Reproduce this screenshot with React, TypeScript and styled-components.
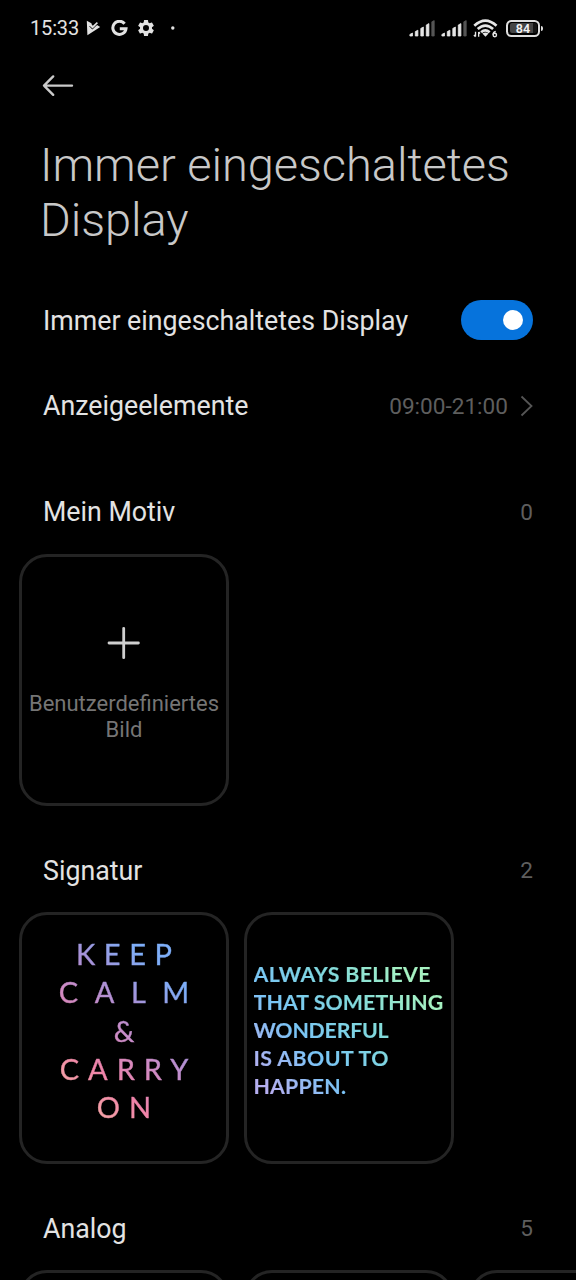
import React from 'react';
import styled, { createGlobalStyle } from 'styled-components';

const GlobalStyle = createGlobalStyle`
  *, *::before, *::after { box-sizing: border-box; }
  html, body { margin: 0; padding: 0; background: #000; }
  body { font-family: Roboto, "Liberation Sans", sans-serif; color: #e3e3e3; }
`;

const Screen = styled.div`
  width: 576px;
  height: 1280px;
  overflow: hidden;
  background: #000;
  display: flex;
  flex-direction: column;
`;

const StatusBar = styled.header`
  flex: none;
  height: 56px;
  padding: 0 36px 0 30px;
  display: flex;
  align-items: center;
  justify-content: space-between;
`;

const StatusGroup = styled.div`
  display: flex;
  align-items: center;
`;

const Clock = styled.span`
  font-size: 20px;
  line-height: 24px;
  letter-spacing: -0.15px;
  width: 55px;
  white-space: nowrap;
`;

const Icon = styled.svg<{ $left?: number; $top?: number }>`
  display: block;
  flex: none;
  margin-left: ${(p) => p.$left ?? 0}px;
  margin-top: ${(p) => p.$top ?? 0}px;
`;

const BackButton = styled.button`
  flex: none;
  width: 34px;
  height: 24px;
  margin: 18px 0 0 41px;
  padding: 0;
  border: 0;
  background: none;
`;

const Title = styled.h1`
  flex: none;
  margin: 39px 0 0 40px;
  font-size: 47px;
  line-height: 55px;
  font-weight: 300;
  letter-spacing: -0.05px;
  color: #c8c8c8;
  white-space: nowrap;
`;

const SettingRow = styled.div<{ $height: number; $top?: number }>`
  flex: none;
  height: ${(p) => p.$height}px;
  margin-top: ${(p) => p.$top ?? 0}px;
  padding: 0 43px;
  display: flex;
  align-items: center;
  justify-content: space-between;
`;

const Label = styled.span<{ $drop?: number }>`
  padding-top: ${(p) => p.$drop ?? 0}px;
  font-size: 26.75px;
  line-height: 32px;
  white-space: nowrap;
`;

const Value = styled.span`
  display: flex;
  align-items: center;
  padding-top: 2px;
  font-size: 22.6px;
  line-height: 28px;
  color: #5e5e5e;
`;

const Switch = styled.div`
  width: 72px;
  height: 40px;
  margin-right: -0.4px;
  padding-right: 10px;
  border-radius: 20px;
  background: #0673dc;
  display: flex;
  align-items: center;
  justify-content: flex-end;
`;

const Knob = styled.div`
  width: 20px;
  height: 20px;
  border-radius: 50%;
  background: #fff;
`;

const Section = styled.section<{ $top: number }>`
  flex: none;
  margin-top: ${(p) => p.$top}px;
`;

const CardRow = styled.div`
  display: flex;
  gap: 15px;
  margin-top: 26px;
  padding-left: 19px;
`;

const Card = styled.div`
  flex: none;
  width: 210px;
  height: 252px;
  border: 3px solid #242424;
  border-radius: 28px;
  display: flex;
  flex-direction: column;
  align-items: center;
`;

const AddLabel = styled.span`
  margin-top: 31px;
  font-size: 22px;
  line-height: 25.5px;
  text-align: center;
  color: #757575;
  white-space: nowrap;
`;

const CalmText = styled.div`
  width: 132px;
  margin-top: 20px;
  font-family: Lato, sans-serif;
  font-size: 29px;
  line-height: 38.3px;
  text-align: center;
  color: transparent;
  -webkit-text-stroke: 0.4px transparent;
  background: linear-gradient(222deg, #7eaef8 20%, #a792d8 38%, #c78cc9 51%, #f083a9 70%, #f5a0a6 84%);
  background-clip: text;
  -webkit-background-clip: text;
`;

const CalmLine = styled.div<{ $spacing: number }>`
  letter-spacing: ${(p) => p.$spacing}px;
  margin-right: ${(p) => -p.$spacing}px;
  white-space: nowrap;
`;

const BelieveText = styled.div`
  width: 191px;
  margin-top: 45px;
  font-family: Lato, sans-serif;
  font-weight: 700;
  font-size: 21.3px;
  line-height: 28.1px;
  color: transparent;
  -webkit-text-stroke: 0.2px transparent;
  background: linear-gradient(50deg, #b5aff0 8%, #79c4f6 32%, #80d9dd 58%, #a6f2c2 84%);
  background-clip: text;
  -webkit-background-clip: text;
`;

const BelieveLine = styled.div<{ $spacing?: number }>`
  letter-spacing: ${(p) => p.$spacing ?? 0}px;
  white-space: nowrap;
`;

const SignalIcon = ({ left }: { left?: number }) => (
  <Icon $left={left} width="26" height="17" viewBox="0 0 26 17" fill="#e6e6e6" stroke="#e6e6e6" strokeWidth=".8" strokeLinejoin="round">
    <path d="M.9 14.4 3.5 13v3H.9zM6.3 11.6l2.6-1.4V16H6.3zM11.8 8.4 14.4 7v9h-2.6zM17.3 5l2.6-1.4V16h-2.6z" />
    <path d="M22.8 1.8 25.2.6V16h-2.4z" fill="#555" stroke="#555" />
  </Icon>
);

const WifiIcon = () => (
  <Icon $left={6} width="25" height="19" viewBox="0 0 26 20" fill="none" stroke="#e6e6e6" strokeWidth="2.8">
    <path d="M1.2 7.2Q12.8-3.6 24.6 7.2M4.8 10.6Q12.8 3.2 21 10.6M8.4 14Q12.8 10 17.4 14" />
    <path d="M9.7 15.3Q13 13 16.2 15.3L13 18.8z" fill="#e6e6e6" stroke="none" />
    <path d="M2.5 13.5v5M.8 16.8l1.7 1.8M5.8 18.8v-5M5.8 13.7l1.5 1.5" strokeWidth="1.4" />
    <path d="M23.8 13.2q-2.8.5-2.8 3.4" strokeWidth="1.5" />
    <circle cx="22.8" cy="16.8" r="1.8" strokeWidth="1.5" />
  </Icon>
);

const Battery = styled.div`
  position: relative;
  margin-left: 8px;
  width: 34px;
  height: 17px;
  border: 2px solid #dedede;
  border-radius: 5.5px;
  padding: 1.5px;
  display: flex;
  &::after {
    content: '';
    position: absolute;
    right: -5px;
    top: 4px;
    width: 2px;
    height: 5px;
    border-radius: 0 2px 2px 0;
    background: #dedede;
  }
`;

const BatteryLevel = styled.div`
  width: 100%;
  border-radius: 2px;
  background: linear-gradient(90deg, #444 84%, #151515 84%);
  font-size: 12.5px;
  font-weight: 600;
  line-height: 11px;
  text-align: center;
  color: #f2f2f2;
`;

interface SectionHeaderProps {
  name: string;
  count: number;
  drop?: number;
}

const SectionHeader = ({ name, count, drop }: SectionHeaderProps) => (
  <SettingRow $height={32}>
    <Label $drop={drop}>{name}</Label>
    <Value>{count}</Value>
  </SettingRow>
);

export default function App() {
  return (
    <Screen>
      <GlobalStyle />
      <StatusBar>
        <StatusGroup>
          <Clock>15:33</Clock>
          <Icon $left={1} width="15" height="16" viewBox="0 0 15 16" fill="#e2e2e2">
            <path d="M.8.8 5.4 3.2 6.4 6.4 11 5 14.2 7 1.4 15.2z" />
            <path d="M3.6 6.2 6.4 9 12.8 2.8" fill="none" stroke="#000" strokeWidth="1" />
            <path d="M5.2 5.2 6.8 6.8 11.4 2.6" fill="none" stroke="#e2e2e2" strokeWidth="1.6" />
          </Icon>
          <Icon $left={10} width="17" height="17" viewBox="0 0 17 17" fill="none" stroke="#e2e2e2" strokeWidth="3">
            <path d="M13.6 3.7A6.6 6.6 0 1 0 15 8.7H8.8" />
          </Icon>
          <Icon $left={8} width="20" height="20" viewBox="0 0 24 24" fill="#e2e2e2">
            <path d="M19.14 12.94c.04-.3.06-.61.06-.94s-.02-.64-.07-.94l2.03-1.58a.49.49 0 0 0 .12-.61l-1.92-3.32a.49.49 0 0 0-.59-.22l-2.39.96a7 7 0 0 0-1.62-.94l-.36-2.54a.48.48 0 0 0-.48-.41h-3.84a.47.47 0 0 0-.47.41l-.36 2.54c-.59.24-1.13.57-1.62.94l-2.39-.96a.48.48 0 0 0-.59.22L2.74 8.87a.47.47 0 0 0 .12.61l2.03 1.58a6 6 0 0 0-.02 1.88l-2.03 1.58a.49.49 0 0 0-.12.61l1.92 3.32c.12.22.37.29.59.22l2.39-.96c.5.38 1.03.7 1.62.94l.36 2.54c.05.24.24.41.48.41h3.84c.24 0 .44-.17.47-.41l.36-2.54a7 7 0 0 0 1.62-.94l2.39.96c.22.08.47 0 .59-.22l1.92-3.32a.47.47 0 0 0-.12-.61zM12 15.6A3.6 3.6 0 1 1 12 8.4a3.6 3.6 0 0 1 0 7.2z" />
          </Icon>
          <Icon $left={14} width="6" height="6" viewBox="0 0 6 6" fill="#e2e2e2">
            <circle cx="2.8" cy="3" r="1.7" />
          </Icon>
        </StatusGroup>
        <StatusGroup>
          <SignalIcon />
          <SignalIcon left={6} />
          <WifiIcon />
          <Battery>
            <BatteryLevel>84</BatteryLevel>
          </Battery>
        </StatusGroup>
      </StatusBar>

      <BackButton aria-label="Zurück">
        <Icon width="34" height="24" viewBox="0 0 34 24" fill="none" stroke="#cacaca" strokeWidth="2.4" strokeLinecap="round" strokeLinejoin="round">
          <path d="M31 11.6H3M12.2 2.4 3 11.6l9.2 9.2" />
        </Icon>
      </BackButton>

      <Title>
        Immer eingeschaltetes
        <br />
        Display
      </Title>

      <SettingRow $height={86} $top={30}>
        <Label $drop={1}>Immer eingeschaltetes Display</Label>
        <Switch>
          <Knob />
        </Switch>
      </SettingRow>
      <SettingRow $height={86}>
        <Label>Anzeigeelemente</Label>
        <Value>
          09:00-21:00
          <Icon $left={12} $top={-2} width="13" height="22" viewBox="0 0 13 22" fill="none" stroke="#555" strokeWidth="1.8">
            <path d="M1.5 1.5 11.5 11l-10 9.5" />
          </Icon>
        </Value>
      </SettingRow>

      <Section $top={47}>
        <SectionHeader name="Mein Motiv" count={0} />
        <CardRow>
          <Card>
            <Icon $top={69} width="34" height="34" viewBox="0 0 34 34" stroke="#cfcfcf" strokeWidth="2.8" strokeLinecap="round">
              <path d="M16.7 2.3v29.4M2 17h29.4" />
            </Icon>
            <AddLabel>
              Benutzerdefiniertes
              <br />
              Bild
            </AddLabel>
          </Card>
        </CardRow>
      </Section>

      <Section $top={48}>
        <SectionHeader name="Signatur" count={2} drop={1} />
        <CardRow>
          <Card>
            <CalmText>
              <CalmLine $spacing={8.6}>KEEP</CalmLine>
              <CalmLine $spacing={16.6}>CALM</CalmLine>
              <CalmLine $spacing={0}>&amp;</CalmLine>
              <CalmLine $spacing={9}>CARRY</CalmLine>
              <CalmLine $spacing={9}>ON</CalmLine>
            </CalmText>
          </Card>
          <Card>
            <BelieveText>
              <BelieveLine $spacing={0.38}>ALWAYS BELIEVE</BelieveLine>
              <BelieveLine $spacing={0.1}>THAT SOMETHING</BelieveLine>
              <BelieveLine $spacing={-0.2}>WONDERFUL</BelieveLine>
              <BelieveLine $spacing={0.45}>IS ABOUT TO</BelieveLine>
              <BelieveLine $spacing={0.2}>HAPPEN.</BelieveLine>
            </BelieveText>
          </Card>
        </CardRow>
      </Section>

      <Section $top={48}>
        <SectionHeader name="Analog" count={5} drop={1} />
        <CardRow>
          <Card />
          <Card />
          <Card />
        </CardRow>
      </Section>
    </Screen>
  );
}
